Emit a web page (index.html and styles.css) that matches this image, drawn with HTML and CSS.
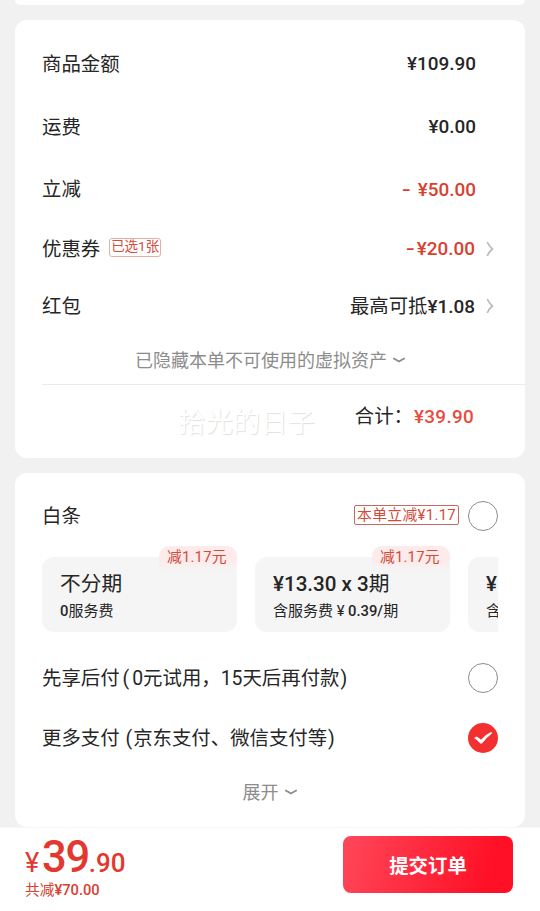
FILE: index.html
```html
<!DOCTYPE html>
<html lang="zh-CN">
<head>
<meta charset="utf-8">
<title>确认订单</title>
<link rel="stylesheet" href="styles.css">
</head>
<body>
<main class="page">
  <div class="card card-previous"></div>

  <section class="card summary">
    <div class="row"><span>商品金额</span><span class="money">¥109.90</span></div>
    <div class="row"><span>运费</span><span class="money">¥0.00</span></div>
    <div class="row row-discount"><span>立减</span><span class="money red"><span class="minus">-</span>¥50.00</span></div>
    <div class="row row-coupon"><span>优惠券</span><span class="tag tag-coupon">已选1张</span><span class="money red"><span class="dash">-</span>¥20.00</span>
      <svg class="arrow" viewBox="0 0 8 16"><path d="M1.2 1 Q3 5 6.3 8 Q3 11 1.2 15"/></svg></div>
    <div class="row row-packet"><span>红包</span><span class="money"><span class="han">最高可抵</span>¥1.08</span>
      <svg class="arrow" viewBox="0 0 8 16"><path d="M1.2 1 Q3 5 6.3 8 Q3 11 1.2 15"/></svg></div>
    <div class="hidden-assets"><span>已隐藏本单不可使用的虚拟资产</span>
      <svg class="chevron" viewBox="0 0 14 6"><path d="M1.2 1.2 Q4 2.7 7 4.5 Q10 2.7 12.8 1.2"/></svg></div>
    <div class="total"><span class="watermark">拾光的日子</span><span>合计：</span><span class="money bright">¥39.90</span></div>
  </section>

  <section class="card payment">
    <div class="pay-row pay-credit"><span>白条</span><span class="tag tag-credit">本单立减¥1.17</span><span class="radio"></span></div>
    <div class="plans">
      <div class="plan"><span class="badge">减1.17元</span><div class="plan-title">不分期</div><div class="plan-fee"><b>0</b>服务费</div></div>
      <div class="plan"><span class="badge">减1.17元</span><div class="plan-title"><b>¥13.30 x 3</b>期</div><div class="plan-fee">含服务费<b><span class="yen">¥</span>0.39/</b>期</div></div>
      <div class="plan"><div class="plan-title"><b>¥</b></div><div class="plan-fee">含</div></div>
    </div>
    <div class="pay-row pay-later"><span>先享后付<i class="open">(</i>0元试用，15天后再付款<i class="close">)</i></span><span class="radio"></span></div>
    <div class="pay-row pay-more"><span>更多支付<i class="open-wide">(</i>京东支付、微信支付等<i class="close">)</i></span>
      <svg class="checked" viewBox="0 0 30 30"><circle cx="15" cy="15" r="15"/><path d="M6 15 L8.6 13.4 Q11 14.7 13 16.7 Q17.5 11.6 23 9.1 L24.4 9.9 Q19.2 13.9 14 20.5 H12.4 Q9.8 17.2 6 15Z"/></svg></div>
    <div class="expand"><span>展开</span>
      <svg class="chevron" viewBox="0 0 14 6"><path d="M1.2 1.2 Q4 2.7 7 4.5 Q10 2.7 12.8 1.2"/></svg></div>
  </section>

  <footer class="checkout">
    <div class="amount">
      <div class="price"><span class="currency">¥</span><span class="integer">39</span><span class="decimal">.90</span></div>
      <div class="saved">共减<b>¥70.00</b></div>
    </div>
    <button class="submit">提交订单</button>
  </footer>
</main>
</body>
</html>
```

FILE: styles.css
```css
* { box-sizing: border-box; }
body { margin: 0; background: #f1f1f1; }
.page {
  display: flex;
  flex-direction: column;
  height: 911px;
  overflow: hidden;
  color: #262626;
  font: 19.4px/1 Roboto, "Noto Sans CJK SC", sans-serif;
  white-space: nowrap;
}
i { font-style: normal; }
b { font-weight: 500; }
.card { margin: 0 15px; background: #fff; border-radius: 12px; flex: none; }
.card-previous { height: 5px; border-radius: 0 0 12px 12px; }

.summary { height: 438px; margin-top: 15px; padding: 12px 0 0 27px; }
.row { display: flex; align-items: center; height: 63px; padding: 2px 49px 0 0; }
.row-discount { height: 62px; }
.row-coupon, .row-packet { height: 58px; padding: 0 31px 0 0; }
.row-coupon { padding-top: 1px; }
.money { margin-left: auto; font-size: 18.9px; font-weight: 500; letter-spacing: 0; }
.red { color: #d8412f; }
.bright { color: #e94b3f; }
.minus { display: inline-block; margin-right: 8px; transform: scaleX(1.35); }
.dash { display: inline-block; margin-right: 3px; transform: scaleX(1.35); }
.han { font-size: 19.4px; font-weight: 400; }
.arrow { width: 8px; height: 16px; margin: -2px 0 0 11px; fill: none; stroke: #bdbdbd; stroke-width: 1.8; }
.tag { border: 1px solid #e5b0a2; border-radius: 3px; color: #d34b3a; }
.tag-coupon { display: flex; align-items: center; justify-content: center; width: 52px; height: 19px; margin: -4px 0 0 9px; padding-bottom: 2px; font-size: 13.5px; }
.hidden-assets { display: flex; align-items: center; height: 48px; padding: 2px 0 0 93px; color: #8c8c8c; font-size: 18px; }
.chevron { width: 14px; height: 6px; fill: none; stroke: #8c8c8c; stroke-width: 1.8; }
.hidden-assets .chevron { margin: -2px 0 0 5px; }
.total { position: relative; display: flex; align-items: center; justify-content: flex-end; height: 63px; padding: 2px 51px 0 0; border-top: 1px solid #ebebeb; }
.total .money { margin-left: 1px; letter-spacing: 0.3px; }
.watermark { position: absolute; left: 136px; top: 25px; color: #fff; font-size: 27.4px; text-shadow: 1px 1px 1px #e2e2e2; }

.payment { height: 354px; margin-top: 15px; padding: 22px 27px 0; }
.pay-row { display: flex; align-items: center; justify-content: space-between; }
.pay-row > span:first-child { padding-top: 2px; }
.pay-credit { height: 41px; }
.tag-credit { display: flex; align-items: center; justify-content: center; width: 105px; height: 20px; margin: -1px 9px 0 auto; padding-top: 1px; border-color: #c8695f; border-radius: 2px; font-size: 14.8px; letter-spacing: 0.35px; }
.radio { width: 30px; height: 30px; border: 1px solid #8c8c8c; border-radius: 50%; }
.plans { display: flex; gap: 18px; height: 96px; padding-top: 21px; overflow: hidden; }
.plan { position: relative; flex: none; width: 195px; height: 75px; padding: 17px 18px 0; background: #f5f5f5; border-radius: 12px; }
.badge { position: absolute; top: -11px; right: 0; width: 78px; height: 25px; padding: 4px 0 0 8px; border-radius: 10px 10px 0 0; background: linear-gradient(#fdeaea 55%, #f9efef00); color: #d34b3a; font-size: 14.8px; letter-spacing: 0.2px; }
.plan-title { font-size: 20.7px; line-height: 21px; }
.plan-title b { font-size: 20.6px; }
.plan-fee { margin-top: 8px; font-size: 15px; line-height: 16px; }
.plan-fee b { font-size: 14.8px; }
.yen { display: inline-block; width: 15px; text-align: center; font-weight: 400; }
.pay-later { height: 60px; margin-top: 16px; }
.open { margin: 0 3px 0 3px; }
.open-wide { margin: 0 1px 0 6px; }
.close { margin-left: 1px; }
.pay-more { height: 60px; }
.checked { width: 30px; height: 30px; fill: #f2302f; }
.checked path { fill: #fff; }
.expand { display: flex; align-items: center; justify-content: center; height: 49px; padding-top: 1px; color: #8c8c8c; font-size: 18px; }
.expand .chevron { margin: -2px 0 0 5px; }

.checkout { display: flex; flex: none; justify-content: space-between; height: 84px; padding: 8px 27px 0 25px; background: #fff; border-top: 1px solid #f7f7f7; }
.price { display: flex; align-items: baseline; height: 47px; color: #e2382f; font-weight: 500; }
.currency { width: 17px; font-size: 27px; font-weight: 400; }
.integer { font-size: 43.5px; letter-spacing: -1.3px; }
.decimal { font-size: 26px; }
.saved { color: #d8412f; font-size: 14.7px; }
.submit { width: 170px; height: 57px; padding: 0; border: 0; border-radius: 8px; background: linear-gradient(105deg, #ff475a, #ff1026 85%); color: #fff; font: 700 19.4px/1 "Noto Sans CJK SC", sans-serif; }
```
